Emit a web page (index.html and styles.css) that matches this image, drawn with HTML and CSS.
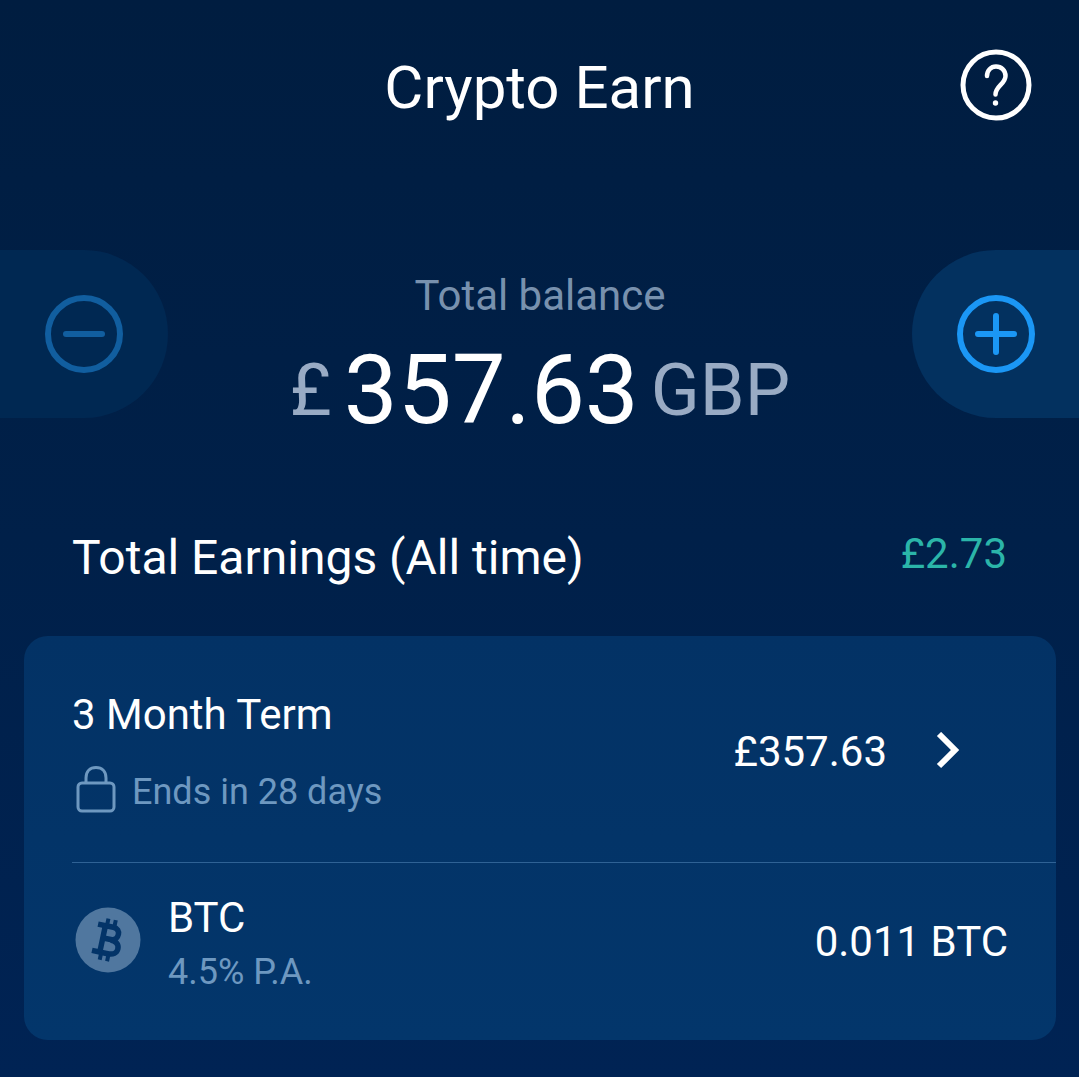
FILE: index.html
```html
<!DOCTYPE html>
<html lang="en">
<head>
  <meta charset="UTF-8">
  <meta name="viewport" content="width=device-width, initial-scale=1.0">
  <title>Crypto Earn</title>
  <link rel="stylesheet" href="styles.css">
</head>
<body>
  <!-- Header -->
  <header>
    <h1>Crypto Earn</h1>
    <button class="help" type="button" aria-label="Help">
      <svg viewBox="0 0 72 72" fill="none" stroke="currentColor" stroke-linecap="round">
        <circle cx="36" cy="36" r="33" stroke-width="5"/>
        <path d="M27 27C27 21.500 30.800 17.500 36 17.500S45.500 21.500 45.500 27C45.500 35 35.500 37 35.500 45.500" stroke-width="4.500"/>
        <circle cx="35.500" cy="54" r="2.700" fill="currentColor" stroke="none"/>
      </svg>
    </button>
  </header>

  <!-- Balance with withdraw / deposit buttons -->
  <section class="balance">
    <button class="side-btn minus" type="button" aria-label="Withdraw">
      <svg viewBox="0 0 78 78" fill="none" stroke="currentColor" stroke-width="6" stroke-linecap="round">
        <circle cx="39" cy="39" r="36"/>
        <path d="M21 39h36"/>
      </svg>
    </button>
    <div class="balance-info">
      <p class="balance-label">Total balance</p>
      <p class="balance-value">
        <span class="unit">£</span>
        <span class="number">357.63</span>
        <span class="unit">GBP</span>
      </p>
    </div>
    <button class="side-btn plus" type="button" aria-label="Deposit">
      <svg viewBox="0 0 78 78" fill="none" stroke="currentColor" stroke-width="6" stroke-linecap="round">
        <circle cx="39" cy="39" r="36"/>
        <path d="M21 39h36M39 21v36"/>
      </svg>
    </button>
  </section>

  <section class="earnings">
    <h2>Total Earnings (All time)</h2>
    <span class="earned">£2.73</span>
  </section>

  <!-- Term card -->
  <section class="card">
    <a class="term" href="#term">
      <div class="text">
        <span class="name">3 Month Term</span>
        <span class="note">
          <svg class="lock" viewBox="0 0 48 52" fill="none" stroke="currentColor" stroke-width="3">
            <rect x="6" y="17" width="36" height="28" rx="4"/>
            <path d="M14 17v-5C14 5.500 18 1.500 24 1.500S34 5.500 34 12v5"/>
          </svg>
          Ends in 28 days
        </span>
      </div>
      <span class="amount">£357.63</span>
      <svg class="chevron" viewBox="0 0 24 40" fill="none" stroke="currentColor" stroke-width="6">
        <path d="M3 2l16 16L3 34"/>
      </svg>
    </a>
    <div class="coin">
      <svg class="coin-icon" viewBox="0 0 72 72">
        <circle cx="36" cy="34" r="32.500" fill="#50779f"/>
        <g transform="rotate(12 36 34)" fill="none" stroke="#033468">
          <path d="M23 20.500H38.500C43 20.500 45 23 45 26.500S43 33 38.500 33H31M38.500 33.500C44 33.500 47.500 36 47.500 40.500S44 47.500 38.500 47.500H22.500M30.500 20v28" stroke-width="5.500"/>
          <path d="M32 13v7M39.500 13v7M32 48v7M39.500 48v7" stroke-width="4"/>
        </g>
      </svg>
      <div class="text">
        <span class="name">BTC</span>
        <span class="note">4.5% P.A.</span>
      </div>
      <span class="amount">0.011 BTC</span>
    </div>
  </section>
</body>
</html>
```
FILE: styles.css
```css
:root {
  --text-color: #fff;
  --muted-color: #6e98c0;
  --label-color: #7891ae;
  --unit-color: #99abc4;
  --accent-color: #1b97f5;
  --green-color: #2bb5a9;
  --font-family: Roboto, "Liberation Sans", sans-serif;
}
* {
  box-sizing: border-box;
  margin: 0;
  padding: 0;
}
html {
  min-height: 100%;
  background: linear-gradient(#001d40, #002049 50%, #002354);
}
body {
  font-family: var(--font-family);
  color: var(--text-color);
}
h1, h2 {
  font-weight: 400;
}
button {
  border: none;
  background: none;
  color: inherit;
  cursor: pointer;
}
svg {
  display: block;
  flex-shrink: 0;
}
/* Header */
header {
  display: grid;
  grid-template-columns: 72px 1fr 72px;
  align-items: start;
  padding: 49px 47px 0;
}
h1 {
  grid-column: 2;
  font-size: 60px;
  line-height: 78px;
  text-align: center;
}
.help svg {
  width: 72px;
  height: 72px;
}
/* Balance */
.balance {
  display: flex;
  justify-content: space-between;
  align-items: flex-start;
  margin-top: 123px;
}
.side-btn {
  display: flex;
  align-items: center;
  width: 168px;
  height: 168px;
  padding: 0 45px;
}
.side-btn svg {
  width: 78px;
  height: 78px;
}
.minus {
  border-radius: 0 84px 84px 0;
  background: #002852;
  color: #115e9f;
}
.plus {
  width: 167px;
  border-radius: 84px 0 0 84px;
  background: #03315f;
  color: var(--accent-color);
}
.balance-info {
  padding-top: 22px;
  text-align: center;
}
.balance-label {
  font-size: 42px;
  line-height: 48px;
  color: var(--label-color);
}
.balance-value {
  display: flex;
  justify-content: center;
  align-items: center;
  gap: 12px;
}
.number {
  font-size: 96px;
  line-height: 140px;
}
.unit {
  font-size: 72px;
  color: var(--unit-color);
}
/* Earnings */
.earnings {
  display: flex;
  justify-content: space-between;
  align-items: flex-start;
  margin-top: 68px;
  padding: 0 72px;
}
h2 {
  font-size: 48px;
  line-height: 60px;
}
.earned {
  font-size: 42px;
  line-height: 52px;
  color: var(--green-color);
}
/* Card */
.card {
  margin: 48px 23px 36px 24px;
  padding-left: 48px;
  border-radius: 24px;
  background: linear-gradient(#033265, #03366b);
}
.term {
  display: flex;
  align-items: center;
  padding: 49px 96px 44px 0;
  border-bottom: 1px solid #2f6295;
  color: inherit;
  text-decoration: none;
}
.text {
  flex: 1;
}
.name {
  display: block;
  font-size: 42px;
  line-height: 60px;
}
.note {
  display: flex;
  align-items: center;
  gap: 12px;
  font-size: 36px;
  line-height: 48px;
  color: var(--muted-color);
}
.term .note {
  margin-top: 21px;
}
.lock {
  width: 48px;
  height: 52px;
}
.amount {
  font-size: 42px;
  line-height: 48px;
}
.chevron {
  width: 24px;
  height: 40px;
  margin-left: 49px;
}
.coin {
  display: flex;
  align-items: center;
  gap: 24px;
  padding: 25px 48px 44px 0;
}
.coin-icon {
  width: 72px;
  height: 72px;
}
```
